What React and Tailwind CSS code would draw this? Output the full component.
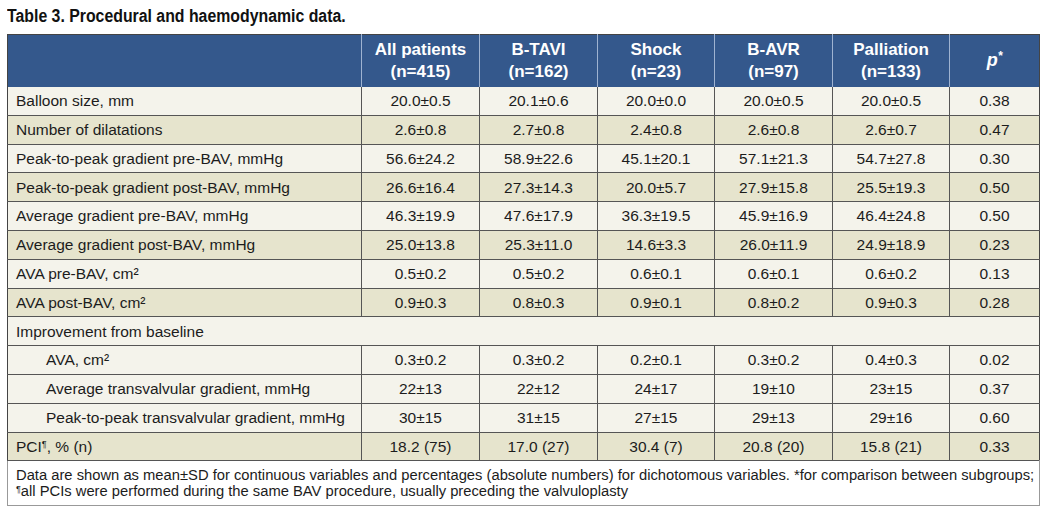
import React from "react";

const rows = [
  { label: "Balloon size, mm", v: ["20.0±0.5", "20.1±0.6", "20.0±0.0", "20.0±0.5", "20.0±0.5", "0.38"], dark: false },
  { label: "Number of dilatations", v: ["2.6±0.8", "2.7±0.8", "2.4±0.8", "2.6±0.8", "2.6±0.7", "0.47"], dark: true },
  { label: "Peak-to-peak gradient pre-BAV, mmHg", v: ["56.6±24.2", "58.9±22.6", "45.1±20.1", "57.1±21.3", "54.7±27.8", "0.30"], dark: false },
  { label: "Peak-to-peak gradient post-BAV, mmHg", v: ["26.6±16.4", "27.3±14.3", "20.0±5.7", "27.9±15.8", "25.5±19.3", "0.50"], dark: true },
  { label: "Average gradient pre-BAV, mmHg", v: ["46.3±19.9", "47.6±17.9", "36.3±19.5", "45.9±16.9", "46.4±24.8", "0.50"], dark: false },
  { label: "Average gradient post-BAV, mmHg", v: ["25.0±13.8", "25.3±11.0", "14.6±3.3", "26.0±11.9", "24.9±18.9", "0.23"], dark: true },
  { label: "AVA pre-BAV, cm²", v: ["0.5±0.2", "0.5±0.2", "0.6±0.1", "0.6±0.1", "0.6±0.2", "0.13"], dark: false },
  { label: "AVA post-BAV, cm²", v: ["0.9±0.3", "0.8±0.3", "0.9±0.1", "0.8±0.2", "0.9±0.3", "0.28"], dark: true },
  { label: "Improvement from baseline", span: true },
  { label: "AVA, cm²", v: ["0.3±0.2", "0.3±0.2", "0.2±0.1", "0.3±0.2", "0.4±0.3", "0.02"], dark: false, indent: true },
  { label: "Average transvalvular gradient, mmHg", v: ["22±13", "22±12", "24±17", "19±10", "23±15", "0.37"], dark: false, indent: true },
  { label: "Peak-to-peak transvalvular gradient, mmHg", v: ["30±15", "31±15", "27±15", "29±13", "29±16", "0.60"], dark: false, indent: true },
  { label: <>PCI<sup className="text-[9px]">¶</sup>, % (n)</>, v: ["18.2 (75)", "17.0 (27)", "30.4 (7)", "20.8 (20)", "15.8 (21)", "0.33"], dark: true },
];

const heads = [
  ["All patients", "(n=415)"],
  ["B-TAVI", "(n=162)"],
  ["Shock", "(n=23)"],
  ["B-AVR", "(n=97)"],
  ["Palliation", "(n=133)"],
];

export default function App() {
  return (
    <div className="w-[1045px] h-[510px] bg-white overflow-hidden" style={{ fontFamily: '"Liberation Sans", Arial, sans-serif' }}>
      <h1 className="pl-[7px] pt-[5px] h-[34px] leading-[22px] whitespace-nowrap">
        <span className="inline-block origin-left scale-x-[0.88] text-[18px] font-bold text-[#111]">
          Table 3. Procedural and haemodynamic data.
        </span>
      </h1>
      <table className="ml-[7px] w-[1032px] table-fixed border-collapse border border-[#444] text-[15.5px] text-[#1c1c1c]">
        <colgroup>
          <col className="w-[354px]" />
          <col className="w-[118px]" />
          <col className="w-[118px]" />
          <col className="w-[117px]" />
          <col className="w-[118px]" />
          <col className="w-[117px]" />
          <col className="w-[90px]" />
        </colgroup>
        <thead>
          <tr className="h-[52px] bg-[#34588c] text-white">
            <th className="border-r border-[#9fb3d1]"></th>
            {heads.map((h) => (
              <th key={h[0]} className="border-r border-[#9fb3d1] text-[17px] font-bold leading-[22px] text-center">
                {h[0]}
                <br />
                {h[1]}
              </th>
            ))}
            <th className="text-[18px] font-bold italic text-center">
              p<sup className="text-[12px]">*</sup>
            </th>
          </tr>
        </thead>
        <tbody>
          {rows.map((r, i) =>
            r.span ? (
              <tr key={i} className="h-[28.8px] bg-[#f4f3eb] border-b border-[#555]">
                <td colSpan={7} className="pl-[8px] leading-none">
                  {r.label}
                </td>
              </tr>
            ) : (
              <tr key={i} className={`h-[28.8px] border-b border-[#555] ${r.dark ? "bg-[#e6e4cd]" : "bg-[#f4f3eb]"}`}>
                <td className={`border-r border-[#555] leading-none whitespace-nowrap ${r.indent ? "pl-[38px]" : "pl-[8px]"}`}>{r.label}</td>
                {r.v.map((x, j) => (
                  <td key={j} className={`text-center leading-none ${j < 5 ? "border-r border-[#555]" : ""}`}>
                    {x}
                  </td>
                ))}
              </tr>
            )
          )}
          <tr className="bg-white">
            <td
              colSpan={7}
              className="border-t border-t-[#555] border-l border-r border-b border-[#999] px-[8px] pt-[6px] pb-[6px] text-[14.75px] leading-[16px] text-[#1c1c1c] whitespace-nowrap"
            >
              Data are shown as mean±SD for continuous variables and percentages (absolute numbers) for dichotomous variables. *for comparison between subgroups;
              <br />
              <sup className="text-[9px]">¶</sup>all PCIs were performed during the same BAV procedure, usually preceding the valvuloplasty
            </td>
          </tr>
        </tbody>
      </table>
    </div>
  );
}
